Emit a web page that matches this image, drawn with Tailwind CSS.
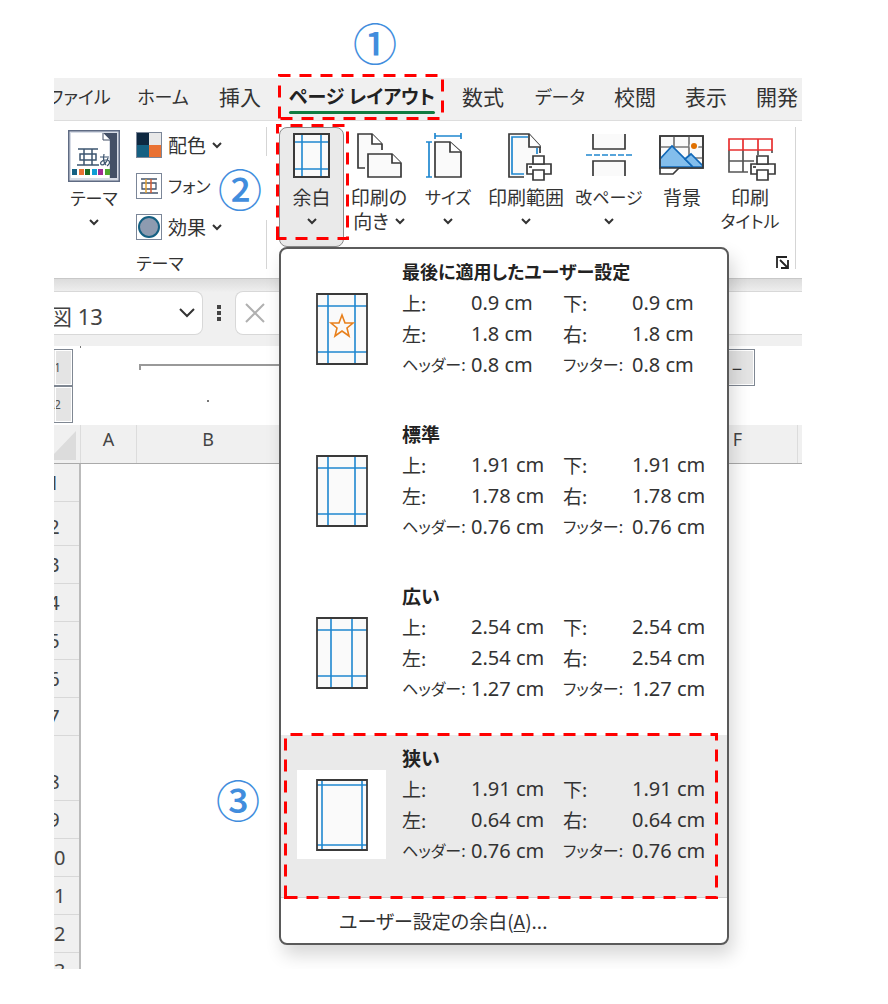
<!DOCTYPE html>
<html lang="ja">
<head>
<title>余白の設定</title>
<meta charset="UTF-8">
<meta name="viewport" content="width=device-width, initial-scale=1.0">
<script src="https://cdn.jsdelivr.net/npm/@tailwindcss/browser@4"></script>
</head>
<body class="bg-white text-[#333] font-['Noto_Sans_CJK_JP',sans-serif] [font-feature-settings:'palt']">

<div class="relative mt-[78px] mr-[86px] ml-[54px]">
  <div class="overflow-hidden">

    <!-- タブ -->
    <nav class="flex h-[43px] items-center border-b border-[#ddd] bg-[#f0f0f0] pb-[6px] text-[21px] leading-8 whitespace-nowrap">
      <a href="#" class="-ml-[17px] w-[85px] shrink-0 text-center text-[18px]">ファイル</a>
      <a href="#" class="w-[82px] shrink-0 text-center text-[18px]">ホーム</a>
      <a href="#" class="w-[72px] shrink-0 text-center">挿入</a>
      <a href="#" class="flex w-[172px] shrink-0 justify-center text-[19px] font-bold text-[#222]"><span class="relative">ページ レイアウト<span class="absolute -bottom-[2px] left-0 h-[3px] w-full rounded bg-[#107c41]"></span></span></a>
      <a href="#" class="w-[70px] shrink-0 text-center">数式</a>
      <a href="#" class="w-[84px] shrink-0 text-center text-[18px]">データ</a>
      <a href="#" class="w-[66px] shrink-0 text-center">校閲</a>
      <a href="#" class="w-[76px] shrink-0 text-center">表示</a>
      <a href="#" class="w-[66px] shrink-0 text-center">開発</a>
    </nav>

    <!-- リボン -->
    <div class="flex h-[158px] border-b border-[#c8c8c8] pt-[6px] text-[19px] leading-6 whitespace-nowrap">
      <section class="flex w-[212px] shrink-0 flex-col">
        <div class="flex h-[124px]">
          <button class="flex w-20 flex-col items-center pt-[3px]">
            <svg width="52" height="52" viewBox="0 0 52 52" fill="none">
              <rect x=".75" y=".75" width="50.5" height="50.5" fill="#d7dce6" stroke="#5f6b83" stroke-width="1.5"/>
              <path d="M3 3H35L41 10V48H3Z" fill="#fff"/>
              <path d="M42 3H49V48H42Z" fill="#445066"/>
              <path d="M35 3H42V10Z" fill="#445066"/>
              <path d="M35 3V10H42" fill="#fff" stroke="#445066"/>
              <path d="M10 19H30M9 35H31M16 19V35M24 19V35M12 24H28V30H12Z" stroke="#3d5570" stroke-width="1.5"/>
              <path d="M32 27H41M36 24C35 29 36 33 38 35M40 28C39 32 36 35 34 35C31 34 33 30 38 30C42 30 43 33 39 36" stroke="#3d5570" stroke-width="1.2"/>
              <path d="M4 39H9V45H4Z" fill="#156082"/><path d="M11 39H16V45H11Z" fill="#e97132"/><path d="M17 39H22V45H17Z" fill="#196b24"/><path d="M24 39H29V45H24Z" fill="#0f9ed5"/><path d="M30 39H35V45H30Z" fill="#a02b93"/><path d="M37 39H42V45H37Z" fill="#4ea72e"/>
            </svg>
            <span class="mt-1 text-[17px] leading-6">テーマ</span>
            <svg class="mt-2" width="10" height="8" viewBox="0 0 10 8" fill="none" stroke="#333" stroke-width="2"><path d="M1 2L5 6L9 2"/></svg>
          </button>
          <div class="flex flex-col pt-[5px]">
            <button class="flex h-[41px] shrink-0 items-start gap-[6px] pl-[2px]">
              <svg class="shrink-0" width="26" height="26" viewBox="0 0 26 26"><path d="M1 1H13V13H1Z" fill="#0e2841"/><path d="M13 1H25V13H13Z" fill="#e8e8e8"/><path d="M1 13H13V25H1Z" fill="#156082"/><path d="M13 13H25V25H13Z" fill="#e97132"/><rect x=".5" y=".5" width="25" height="25" fill="none" stroke="#7b8698"/></svg>
              <span class="pt-px">配色</span>
              <svg class="mt-[9px] shrink-0" width="10" height="8" viewBox="0 0 10 8" fill="none" stroke="#333" stroke-width="2"><path d="M1 2L5 6L9 2"/></svg>
            </button>
            <button class="flex h-[41px] shrink-0 items-start gap-[6px] pl-[2px]">
              <svg class="shrink-0" width="26" height="26" viewBox="0 0 26 26" fill="none"><rect x=".5" y=".5" width="25" height="25" fill="#fff" stroke="#7b8698"/><path d="M5 6H21M4 20H22M6 10H20V16H6Z" stroke="#44546a" stroke-width="1.3"/><path d="M10 6V20" stroke="#e0a030" stroke-width="1.5"/><path d="M15 6V20" stroke="#d05a30" stroke-width="1.5"/></svg>
              <span class="pt-px text-[17px] leading-6">フォント</span>
            </button>
            <button class="flex h-[41px] shrink-0 items-start gap-[6px] pl-[2px]">
              <svg class="shrink-0" width="26" height="26" viewBox="0 0 26 26"><rect x=".5" y=".5" width="25" height="25" fill="#fff" stroke="#7b8698"/><circle cx="13" cy="13" r="10" fill="#8e9bb0" stroke="#156082" stroke-width="2"/></svg>
              <span class="pt-px">効果</span>
              <svg class="mt-[9px] shrink-0" width="10" height="8" viewBox="0 0 10 8" fill="none" stroke="#333" stroke-width="2"><path d="M1 2L5 6L9 2"/></svg>
            </button>
          </div>
        </div>
        <h2 class="text-center text-[17px] leading-6">テーマ</h2>
      </section>
      <div class="h-[142px] w-px shrink-0 bg-[#d5d5d5]"></div>

      <section class="flex shrink-0 pl-3">
        <button class="flex h-[120px] w-[65px] flex-col items-center rounded-lg border border-[#8a8a8a] bg-[#eaeaea] pt-[5px]">
          <svg width="56" height="48" viewBox="0 0 56 48" fill="none">
            <rect x="10" y="1" width="35" height="43" fill="#fafafa"/>
            <path d="M18 1V44M37 1V44M10 9H45M10 36H45" stroke="#2088d0" stroke-width="1.6"/>
            <rect x="10" y="1" width="35" height="43" stroke="#3a3a3a" stroke-width="2"/>
          </svg>
          <span class="mt-1">余白</span>
          <svg class="mt-2" width="10" height="8" viewBox="0 0 10 8" fill="none" stroke="#333" stroke-width="2"><path d="M1 2L5 6L9 2"/></svg>
        </button>
        <button class="flex h-[120px] w-[70px] flex-col items-center pt-[6px]">
          <svg width="56" height="48" viewBox="0 0 56 48" fill="#fafafa" stroke="#3a3a3a" stroke-width="1.7">
            <path d="M14 35H7V1H21L31 11V17" /><path d="M21 1V11H31" fill="#fff"/>
            <path d="M17 21H41L50 30V44H17Z"/><path d="M41 21V30H50" fill="#fff"/>
          </svg>
          <span class="mt-1">印刷の</span>
          <span class="flex items-center gap-[6px]">向き<svg width="10" height="8" viewBox="0 0 10 8" fill="none" stroke="#333" stroke-width="2"><path d="M1 2L5 6L9 2"/></svg></span>
        </button>
        <button class="flex h-[120px] w-[68px] flex-col items-center pt-[6px]">
          <svg width="56" height="48" viewBox="0 0 56 48" fill="none" stroke="#2088d0" stroke-width="1.7">
            <path d="M15 3H41M15 0V6M41 0V6M9 9V44M6 9H12M6 44H12"/>
            <path d="M15 9H30L41 19V44H15Z" fill="#fafafa" stroke="#3a3a3a"/><path d="M30 9V19H41" fill="#fff" stroke="#3a3a3a"/>
          </svg>
          <span class="mt-1 text-[17px] leading-6">サイズ</span>
          <svg class="mt-2" width="10" height="8" viewBox="0 0 10 8" fill="none" stroke="#333" stroke-width="2"><path d="M1 2L5 6L9 2"/></svg>
        </button>
        <button class="flex h-[120px] w-[88px] flex-col items-center pt-[6px]">
          <svg width="56" height="48" viewBox="0 0 56 48" fill="none" stroke="#3a3a3a" stroke-width="1.7">
            <path d="M26 44H11V1H31L42 13V20" fill="#fafafa"/>
            <path d="M26 41H14V4H30M39 15V21" stroke="#2088d0"/>
            <path d="M31 1V14H43" fill="#fff"/>
            <path d="M29 31H53V41H29Z" fill="#fff"/><path d="M35 23H46V31H35ZM35 37H46V47H35Z" fill="#fff"/><path d="M31 34H34"/>
          </svg>
          <span class="mt-1">印刷範囲</span>
          <svg class="mt-2" width="10" height="8" viewBox="0 0 10 8" fill="none" stroke="#333" stroke-width="2"><path d="M1 2L5 6L9 2"/></svg>
        </button>
        <button class="flex h-[120px] w-[78px] flex-col items-center pt-[6px]">
          <svg width="56" height="48" viewBox="0 0 56 48" fill="#fafafa" stroke="#3a3a3a" stroke-width="1.7">
            <path d="M12 1V16H44V1M12 43V28H44V43"/>
            <path d="M5 22H51" stroke="#2088d0" stroke-dasharray="6 2"/>
          </svg>
          <span class="mt-1 text-[17px] leading-6">改ページ</span>
          <svg class="mt-2" width="10" height="8" viewBox="0 0 10 8" fill="none" stroke="#333" stroke-width="2"><path d="M1 2L5 6L9 2"/></svg>
        </button>
        <button class="flex h-[120px] w-[68px] flex-col items-center pt-[6px]">
          <svg width="56" height="48" viewBox="0 0 56 48" fill="none" stroke="#3a3a3a" stroke-width="1.7">
            <path d="M6 3H49V35H6Z" fill="#fafafa"/>
            <path d="M20 3V34M35 3V34M6 14H49M35 25H49" stroke="#777"/>
            <path d="M6 35V41H19L25 35" fill="#fff"/>
            <circle cx="40" cy="13" r="4.5" fill="#fafafa" stroke="none"/><circle cx="40" cy="13" r="3" fill="#e07000" stroke="none"/>
            <path d="M6 26L18 13L39 34H6Z" fill="#83beec" stroke="#1068b8"/><path d="M31 26L37 21L49 33V34H39Z" fill="#83beec" stroke="#1068b8"/>
            <path d="M6 3H49V35H6Z"/>
          </svg>
          <span class="mt-1">背景</span>
        </button>
        <button class="flex h-[120px] w-[68px] flex-col items-center pt-[6px]">
          <svg width="56" height="48" viewBox="0 0 56 48" fill="none" stroke="#555" stroke-width="1.7">
            <path d="M26 39H7V17M50 17V20M7 28H32M21 17V39M36 17V22"/>
            <path d="M7 6H50V17H7ZM21 6V17M36 6V17" stroke="#e83030" fill="#fff"/>
            <path d="M29 31H53V41H29Z" fill="#fff" stroke="#3a3a3a"/><path d="M35 23H46V31H35ZM35 37H46V47H35Z" fill="#fff" stroke="#3a3a3a"/><path d="M31 34H34" stroke="#3a3a3a"/>
          </svg>
          <span class="mt-1">印刷</span>
          <span class="text-[17px] leading-6">タイトル</span>
        </button>
      </section>
      <button class="-ml-2 flex h-[142px] w-[19px] shrink-0 items-end justify-start" aria-label="ページ設定">
        <svg width="13" height="13" viewBox="0 0 13 13" fill="none" stroke="#222" stroke-width="1.8"><path d="M1 12V1H11M4 4L11 11M12 4V12H5"/></svg>
      </button>
      <div class="h-[142px] w-px shrink-0 bg-[#d5d5d5]"></div>
    </div>

    <!-- 数式バー -->
    <div class="flex h-[67px] items-start bg-linear-to-b from-[#dcdcdc] to-[#f0f0f0] to-20% pt-3">
      <div class="flex h-11 w-[149px] shrink-0 items-center rounded-r-lg border border-l-0 border-[#d8d8d8] bg-white">
        <input type="text" value="図 13" aria-label="名前ボックス" class="-ml-1 w-[129px] pt-[6px] font-['Noto_Sans','Noto_Sans_CJK_JP',sans-serif] text-[22px] leading-8 text-[#444] outline-none">
        <svg width="16" height="10" viewBox="0 0 16 10" fill="none" stroke="#333" stroke-width="2"><path d="M1 1L8 8L15 1"/></svg>
      </div>
      <svg class="mt-[13px] shrink-0" width="32" height="18" viewBox="0 0 32 18" fill="#444"><path d="M14 1H18V5H14ZM14 7H18V11H14ZM14 13H18V17H14Z"/></svg>
      <div class="flex h-11 flex-1 items-center rounded-l-lg border border-r-0 border-[#d8d8d8] bg-white pl-[9px]">
        <svg width="20" height="20" viewBox="0 0 20 20" stroke="#b0b0b0" stroke-width="2"><path d="M1 1L19 19M19 1L1 19"/></svg>
      </div>
    </div>

    <!-- アウトライン -->
    <div class="flex h-[79px] items-start justify-between pt-[3px]">
      <div class="flex w-[19px] shrink-0 flex-col font-['Noto_Sans',sans-serif] text-xs">
        <button class="h-[37px] border border-l-0 border-[#7f8792] bg-[#e4e4e4] pr-4 text-[#555] outline-1 -outline-offset-2 outline-white">1</button>
        <button class="h-[37px] border border-l-0 border-[#7f8792] bg-[#e4e4e4] pr-4 text-[#555] outline-1 -outline-offset-2 outline-white">2</button>
      </div>
      <svg class="-mt-[3px] shrink-0" width="160" height="60" viewBox="0 0 160 60" fill="none"><path d="M7 0H8V2H7ZM134 54H136V56H134Z" fill="#777"/></svg>
      <div class="-ml-[94px] mt-[15px] h-[6px] flex-1 border-t-2 border-l-2 border-[#999]"></div>
      <button class="mr-[47px] h-[37px] w-9 shrink-0 border border-[#7f8792] bg-[#e4e4e4] text-lg leading-8 outline-1 -outline-offset-2 outline-white">−</button>
    </div>

    <!-- シート -->
    <div class="flex h-[39px] border-b border-[#aaa] bg-[#f0f0f0] text-center font-['Noto_Sans',sans-serif] text-lg leading-[28px] text-[#444]">
      <div class="flex w-[26px] shrink-0 pt-[6px]"><svg width="22" height="29" viewBox="0 0 22 29"><path d="M22 0V29H0V23Z" fill="#dcdcdc"/></svg></div>
      <div class="w-[57px] shrink-0 border-r border-l border-[#dcdcdc]">A</div>
      <div class="w-[142px] shrink-0">B</div>
      <div class="flex-1"></div>
      <div class="w-[120px] shrink-0 border-r border-[#dcdcdc]">F</div>
      <div class="w-1 shrink-0"></div>
    </div>
    <div class="flex w-[27px] flex-col items-end overflow-hidden border-r-2 border-[#bbb] bg-[#f0f0f0] text-center font-['Noto_Sans',sans-serif] text-xl leading-[36px] text-[#444]">
      <div class="flex h-[38px] w-[50px] items-end justify-center border-b border-[#d8d8d8]">1</div>
      <div class="flex h-11 w-[50px] items-end justify-center border-b border-[#d8d8d8]">2</div>
      <div class="flex h-[38px] w-[50px] items-end justify-center border-b border-[#d8d8d8]">3</div>
      <div class="flex h-[38px] w-[50px] items-end justify-center border-b border-[#d8d8d8]">4</div>
      <div class="flex h-[38px] w-[50px] items-end justify-center border-b border-[#d8d8d8]">5</div>
      <div class="flex h-[38px] w-[50px] items-end justify-center border-b border-[#d8d8d8]">6</div>
      <div class="flex h-[38px] w-[50px] items-end justify-center border-b border-[#d8d8d8]">7</div>
      <div class="flex h-[65px] w-[50px] items-end justify-center border-b border-[#d8d8d8]">8</div>
      <div class="flex h-[38px] w-[50px] items-end justify-center border-b border-[#d8d8d8]">9</div>
      <div class="flex h-[38px] w-[50px] items-end justify-center border-b border-[#d8d8d8]">10</div>
      <div class="flex h-[38px] w-[50px] items-end justify-center border-b border-[#d8d8d8]">11</div>
      <div class="flex h-[38px] w-[50px] items-end justify-center border-b border-[#d8d8d8]">12</div>
      <div class="h-4 w-[50px] overflow-hidden">13</div>
    </div>
  </div>

  <!-- 余白メニュー -->
  <div role="menu" class="absolute top-[169px] left-[225px] w-[450px] rounded-lg border-2 border-[#5a5a5a] bg-white text-[19px] leading-[31px] shadow-[4px_10px_18px_rgba(0,0,0,0.16)]">
    <button role="menuitem" class="flex h-[162px] w-full items-start pt-[7px] pl-4 text-left">
      <span class="mt-7 mr-4 flex size-[89px] shrink-0 items-center justify-center">
        <svg width="52" height="72" viewBox="0 0 52 72" fill="none"><path d="M1 1H51V71H1Z" fill="#fafafa"/><path d="M12 1V71M39 1V71M1 13H51M1 59H51" stroke="#2088d0" stroke-width="1.6"/><path d="M1 1H51V71H1Z" stroke="#3a3a3a" stroke-width="1.8"/><path d="M26 22L29 30H37L31 35L33 43L26 38L19 43L21 35L15 30H23Z" stroke="#e8801c" stroke-width="1.6"/></svg>
      </span>
      <span class="grid grid-cols-[69px_92px_69px_auto] whitespace-nowrap">
        <b class="col-span-4 text-[18px] leading-[31px] text-[#222]">最後に適用したユーザー設定</b>
        <span>上:</span><span class="font-['Noto_Sans',sans-serif] text-xl leading-[31px]">0.9 cm</span><span>下:</span><span class="font-['Noto_Sans',sans-serif] text-xl leading-[31px]">0.9 cm</span>
        <span>左:</span><span class="font-['Noto_Sans',sans-serif] text-xl leading-[31px]">1.8 cm</span><span>右:</span><span class="font-['Noto_Sans',sans-serif] text-xl leading-[31px]">1.8 cm</span>
        <span class="text-[16px] leading-[31px]">ヘッダー:</span><span class="font-['Noto_Sans',sans-serif] text-xl leading-[31px]">0.8 cm</span><span class="text-[16px] leading-[31px]">フッター:</span><span class="font-['Noto_Sans',sans-serif] text-xl leading-[31px]">0.8 cm</span>
      </span>
    </button>
    <button role="menuitem" class="flex h-[162px] w-full items-start pt-[7px] pl-4 text-left">
      <span class="mt-7 mr-4 flex size-[89px] shrink-0 items-center justify-center">
        <svg width="52" height="72" viewBox="0 0 52 72" fill="none"><path d="M1 1H51V71H1Z" fill="#fafafa"/><path d="M12 1V71M39 1V71M1 13H51M1 59H51" stroke="#2088d0" stroke-width="1.6"/><path d="M1 1H51V71H1Z" stroke="#3a3a3a" stroke-width="1.8"/></svg>
      </span>
      <span class="grid grid-cols-[69px_92px_69px_auto] whitespace-nowrap">
        <b class="col-span-4 text-[#222]">標準</b>
        <span>上:</span><span class="font-['Noto_Sans',sans-serif] text-xl leading-[31px]">1.91 cm</span><span>下:</span><span class="font-['Noto_Sans',sans-serif] text-xl leading-[31px]">1.91 cm</span>
        <span>左:</span><span class="font-['Noto_Sans',sans-serif] text-xl leading-[31px]">1.78 cm</span><span>右:</span><span class="font-['Noto_Sans',sans-serif] text-xl leading-[31px]">1.78 cm</span>
        <span class="text-[16px] leading-[31px]">ヘッダー:</span><span class="font-['Noto_Sans',sans-serif] text-xl leading-[31px]">0.76 cm</span><span class="text-[16px] leading-[31px]">フッター:</span><span class="font-['Noto_Sans',sans-serif] text-xl leading-[31px]">0.76 cm</span>
      </span>
    </button>
    <button role="menuitem" class="flex h-[162px] w-full items-start pt-[7px] pl-4 text-left">
      <span class="mt-7 mr-4 flex size-[89px] shrink-0 items-center justify-center">
        <svg width="52" height="72" viewBox="0 0 52 72" fill="none"><path d="M1 1H51V71H1Z" fill="#fafafa"/><path d="M15 1V71M36 1V71M1 13H51M1 59H51" stroke="#2088d0" stroke-width="1.6"/><path d="M1 1H51V71H1Z" stroke="#3a3a3a" stroke-width="1.8"/></svg>
      </span>
      <span class="grid grid-cols-[69px_92px_69px_auto] whitespace-nowrap">
        <b class="col-span-4 text-[#222]">広い</b>
        <span>上:</span><span class="font-['Noto_Sans',sans-serif] text-xl leading-[31px]">2.54 cm</span><span>下:</span><span class="font-['Noto_Sans',sans-serif] text-xl leading-[31px]">2.54 cm</span>
        <span>左:</span><span class="font-['Noto_Sans',sans-serif] text-xl leading-[31px]">2.54 cm</span><span>右:</span><span class="font-['Noto_Sans',sans-serif] text-xl leading-[31px]">2.54 cm</span>
        <span class="text-[16px] leading-[31px]">ヘッダー:</span><span class="font-['Noto_Sans',sans-serif] text-xl leading-[31px]">1.27 cm</span><span class="text-[16px] leading-[31px]">フッター:</span><span class="font-['Noto_Sans',sans-serif] text-xl leading-[31px]">1.27 cm</span>
      </span>
    </button>
    <button role="menuitem" class="flex h-[162px] w-full items-start bg-[#eaeaea] pt-[7px] pl-4 text-left">
      <span class="mt-7 mr-4 flex size-[89px] shrink-0 items-center justify-center bg-white">
        <svg width="52" height="72" viewBox="0 0 52 72" fill="none"><path d="M1 1H51V71H1Z" fill="#fafafa"/><path d="M6 1V71M46 1V71M1 6H51M1 66H51" stroke="#2088d0" stroke-width="1.6"/><path d="M1 1H51V71H1Z" stroke="#3a3a3a" stroke-width="1.8"/></svg>
      </span>
      <span class="grid grid-cols-[69px_92px_69px_auto] whitespace-nowrap">
        <b class="col-span-4 text-[#222]">狭い</b>
        <span>上:</span><span class="font-['Noto_Sans',sans-serif] text-xl leading-[31px]">1.91 cm</span><span>下:</span><span class="font-['Noto_Sans',sans-serif] text-xl leading-[31px]">1.91 cm</span>
        <span>左:</span><span class="font-['Noto_Sans',sans-serif] text-xl leading-[31px]">0.64 cm</span><span>右:</span><span class="font-['Noto_Sans',sans-serif] text-xl leading-[31px]">0.64 cm</span>
        <span class="text-[16px] leading-[31px]">ヘッダー:</span><span class="font-['Noto_Sans',sans-serif] text-xl leading-[31px]">0.76 cm</span><span class="text-[16px] leading-[31px]">フッター:</span><span class="font-['Noto_Sans',sans-serif] text-xl leading-[31px]">0.76 cm</span>
      </span>
    </button>
    <button role="menuitem" class="h-[46px] w-full border-t border-[#d0d0d0] pl-[58px] text-left">ユーザー設定の余白(<u class="underline-offset-2">A</u>)...</button>
  </div>

  <!-- 手順の目印 -->
  <svg class="pointer-events-none absolute -top-[4px] left-[224px]" width="166" height="46" viewBox="0 0 166 46" fill="none" stroke="#f00" stroke-width="3" stroke-dasharray="12 9"><path d="M1.5 44.5V1.5H164.5V44.5Z"/></svg>
  <svg class="pointer-events-none absolute top-[46px] left-[222px]" width="73" height="116" viewBox="0 0 73 116" fill="none" stroke="#f00" stroke-width="3" stroke-dasharray="12 9"><path d="M1.5 114.5V1.5H71.5V114.5Z"/></svg>
  <svg class="pointer-events-none absolute top-[655px] left-[230px]" width="434" height="166" viewBox="0 0 434 166" fill="none" stroke="#f00" stroke-width="3" stroke-dasharray="12 9"><path d="M1.5 164.5V1.5H432.5V164.5Z"/></svg>
  <div class="absolute -top-[60px] left-[297px] flex h-12 w-12 items-center justify-center text-[44px] leading-none font-medium text-[#418ddd]">①</div>
  <div class="absolute top-[78px] left-[157px] flex h-16 w-[58px] items-center justify-center bg-white text-[44px] leading-none font-medium text-[#418ddd]">②</div>
  <div class="absolute top-[697px] left-[160px] flex h-12 w-12 items-center justify-center text-[44px] leading-none font-medium text-[#418ddd]">③</div>
</div>

</body>
</html>
